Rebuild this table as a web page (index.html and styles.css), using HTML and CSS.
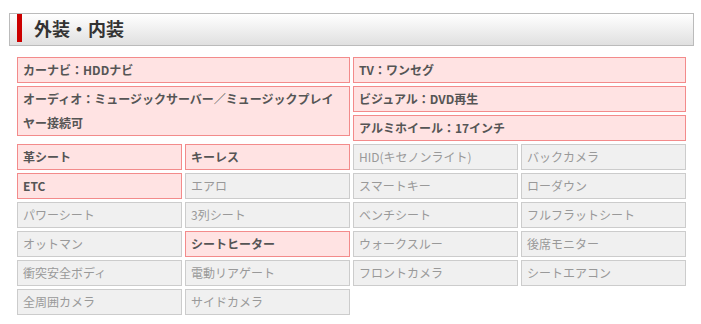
FILE: index.html
```html
<!DOCTYPE html>
<html lang="ja">
<head>
    <meta charset="UTF-8">
    <meta name="viewport" content="width=device-width, initial-scale=1.0">
    <title>外装・内装</title>
    <link rel="stylesheet" href="styles.css">
</head>
<body>
    <div class="section">
        <div class="section-head">
            <h2>外装・内装</h2>
        </div>

        <div class="spec-wide">
            <ul class="spec-col">
                <li class="on">カーナビ：HDDナビ</li>
                <li class="on">オーディオ：ミュージックサーバー／ミュージックプレイヤー接続可</li>
            </ul>
            <ul class="spec-col">
                <li class="on">TV：ワンセグ</li>
                <li class="on">ビジュアル：DVD再生</li>
                <li class="on">アルミホイール：17インチ</li>
            </ul>
        </div>

        <ul class="spec-grid">
            <li class="on">革シート</li>
            <li class="on">キーレス</li>
            <li>HID(キセノンライト)</li>
            <li>バックカメラ</li>
            <li class="on">ETC</li>
            <li>エアロ</li>
            <li>スマートキー</li>
            <li>ローダウン</li>
            <li>パワーシート</li>
            <li>3列シート</li>
            <li>ベンチシート</li>
            <li>フルフラットシート</li>
            <li>オットマン</li>
            <li class="on">シートヒーター</li>
            <li>ウォークスルー</li>
            <li>後席モニター</li>
            <li>衝突安全ボディ</li>
            <li>電動リアゲート</li>
            <li>フロントカメラ</li>
            <li>シートエアコン</li>
            <li>全周囲カメラ</li>
            <li>サイドカメラ</li>
        </ul>
    </div>
</body>
</html>
```

FILE: styles.css
```css
body {
    margin: 0;
    background: #fff;
    font-family: "Noto Sans CJK JP", "Noto Sans", sans-serif;
}
ul {
    list-style: none;
    margin: 0;
    padding: 0;
}
.section {
    width: 685px;
    padding: 13px 0 0 9px;
}
.section-head {
    border: 1px solid #bbb;
    background: linear-gradient(#fff, #e0e0e0);
    padding: 0 0 3px 7px;
}
.section-head h2 {
    margin: 0;
    border-left: 5px solid #c00;
    padding-left: 12px;
    height: 28px;
    line-height: 29px;
    font-size: 18px;
    font-weight: bold;
    color: #333;
}
.spec-wide {
    display: grid;
    grid-template-columns: 333px 333px;
    gap: 3px;
    margin: 11px 8px 0;
}
.spec-col {
    display: flex;
    flex-direction: column;
    gap: 3px;
}
.spec-grid {
    display: grid;
    grid-template-columns: repeat(4, 165px);
    gap: 3px;
    margin: 3px 8px 0;
}
.spec-col li, .spec-grid li {
    border: 1px solid #ccc;
    background: #f0f0f0;
    padding: 0 5px;
    line-height: 24px;
    font-size: 12px;
    color: #999;
}
.spec-col li.on, .spec-grid li.on {
    border-color: #f38b8b;
    background: #ffe3e3;
    color: #555;
    font-weight: bold;
}
```
